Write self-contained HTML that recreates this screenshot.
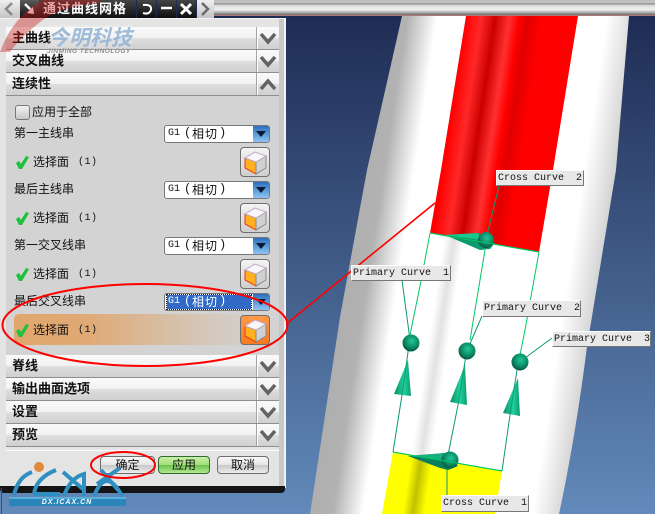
<!DOCTYPE html>
<html><head><meta charset="utf-8"><style>
html,body{margin:0;padding:0}
body{width:655px;height:514px;overflow:hidden;position:relative;background:#3a5580;font-family:"Liberation Sans","WenQuanYi Zen Hei","Noto Sans CJK SC",sans-serif;color:#111}
div,span{position:absolute;box-sizing:border-box;white-space:nowrap}
svg{position:absolute;left:0;top:0}
.sec{left:6px;width:273px;height:23px;background:linear-gradient(#fafafa 0,#f2f2f2 48%,#dedede 52%,#d0d0d0 100%);border-bottom:1px solid #8f8f8f;font-size:13px;font-weight:bold;line-height:22px;padding-left:6px;color:#111}
.sec:after{content:"";position:absolute;left:250px;top:0;width:1px;height:22px;background:#a4a4a4;box-shadow:1px 0 0 #fff}
.lab{left:14px;font-size:12px;line-height:16px;color:#111}
.dd{left:164px;width:106px;height:18px;background:#fff;border:1px solid #777;border-radius:3px;color:#111}
.dd i{position:absolute;right:0;top:0;width:16px;height:16px;background:linear-gradient(#2a6fc0,#8fc4f2);border-radius:0 2px 2px 0}
.dd i:after{content:"";position:absolute;left:3px;top:5px;border:5px solid transparent;border-top:6px solid #0b1a30;border-bottom:0}
.g{left:3px;top:0;font:10px/16px "Liberation Mono",monospace}
.p1{left:19px;top:0;font:12px/15px "Liberation Mono",monospace}
.p2{left:27px;top:0;font-size:12px;line-height:16px;letter-spacing:1px}
.p3{left:54px;top:0;font:12px/15px "Liberation Mono",monospace}
.cb{left:240px;width:30px;height:30px;background:linear-gradient(#f4f4f4,#cfcfcf);border:1px solid #6f6f6f;border-radius:4px}
.sel{left:33px;font-size:12px;line-height:16px}
.n{left:78px;font:10px/16px "Liberation Mono",monospace;letter-spacing:.5px}
.btn{top:456px;height:18px;text-align:center;font-size:12px;line-height:16px;border:1px solid #6d6d6d;border-radius:4px;background:linear-gradient(#f8f8f8,#e6e6e6 48%,#c8c8c8 52%,#ececec)}
.cl{background:#e8e8e8;border-right:1px solid #777;border-bottom:1px solid #777;border-left:1px solid #fff;border-top:1px solid #fff;font:10px/15px "Liberation Mono",monospace;padding-left:1px;color:#111;white-space:pre}
.tb{top:0;height:18px}
</style></head><body>
<svg width="655" height="514" viewBox="0 0 655 514">
<defs>
<linearGradient id="bg" x1="0" y1="16" x2="0" y2="514" gradientUnits="userSpaceOnUse"><stop offset="0" stop-color="#1e2c54"/><stop offset="1" stop-color="#628aba"/></linearGradient>
<linearGradient id="tube" gradientUnits="userSpaceOnUse" x1="380" y1="0" x2="644" y2="39.6">
<stop offset="0" stop-color="#aeaeae"/><stop offset=".11" stop-color="#b2b2b2"/><stop offset=".222" stop-color="#fff"/><stop offset=".37" stop-color="#fff"/><stop offset=".407" stop-color="#e2e2e2"/><stop offset=".444" stop-color="#fff"/><stop offset=".85" stop-color="#fff"/><stop offset=".944" stop-color="#dcdcdc"/><stop offset="1" stop-color="#c4c4c4"/></linearGradient>
<linearGradient id="red" gradientUnits="userSpaceOnUse" x1="380" y1="0" x2="644" y2="39.6">
<stop offset=".326" stop-color="#f00"/><stop offset=".385" stop-color="#ff2828"/><stop offset=".437" stop-color="#cc0000"/><stop offset=".489" stop-color="#ff3030"/><stop offset=".526" stop-color="#f00"/><stop offset=".556" stop-color="#e00000"/><stop offset=".611" stop-color="#f00"/></linearGradient>
<linearGradient id="yel" gradientUnits="userSpaceOnUse" x1="380" y1="0" x2="644" y2="39.6">
<stop offset=".37" stop-color="#ff0"/><stop offset=".407" stop-color="#c0c000"/><stop offset=".45" stop-color="#ff0"/></linearGradient>
<radialGradient id="sph" cx=".55" cy=".38" r=".65"><stop offset="0" stop-color="#1fc796"/><stop offset=".6" stop-color="#0c8a66"/><stop offset="1" stop-color="#04503a"/></radialGradient>
<linearGradient id="cone" x1="0" x2="1" y1="0" y2="0"><stop offset="0" stop-color="#0a8f6a"/><stop offset=".6" stop-color="#1fd29a"/><stop offset="1" stop-color="#0c9a72"/></linearGradient>
</defs>
<rect width="655" height="514" fill="url(#bg)"/>
<path d="M402 16 L367 170 L340 317 L310 514 L559 514 Q575 440 587 347 L616 170 L629 16Z" fill="url(#tube)"/>
<path d="M466 16 L578 16 L553 170 L539 252 L430 233 L441 170Z" fill="url(#red)"/>
<path d="M393 452 L502 471 L495 514 L382 514Z" fill="url(#yel)"/>
<path d="M285 325 L435 203" stroke="#f00" stroke-width="1.6" fill="none"/>
<g fill="none" stroke="#00c864" stroke-width="1">
<path d="M430 233 L539 252"/><path d="M393 452 L502 471"/>
<path d="M430 233 L421 281 L409 340"/><path d="M485 250 L470 340"/><path d="M539 252 L525 330 L518 365"/>
</g>
<polygon points="408,360 394,394 411,396" fill="url(#cone)"/>
<polygon points="465,365 450,402 467,405" fill="url(#cone)"/>
<polygon points="518,378 503,413 520,416" fill="url(#cone)"/>
<g fill="none" stroke="#0c9a78" stroke-width="1">
<path d="M409 345 L402 395 L393 452"/><path d="M466 355 L458 405 L447 460"/><path d="M517 370 L510 415 L502 471"/>
<path d="M402 280 L410 340"/><path d="M482 316 L469 346"/><path d="M552 338 L525 358"/><path d="M499 186 L487 235"/><path d="M447 462 L447 495"/>
</g>
<polygon points="445,235 478,233 495,243 490,249 480,250" fill="#0a9a6e"/>
<polygon points="445,235 478,233 482,240" fill="#18c88c"/>
<polygon points="408,456 445,453 458,466 448,470 440,468" fill="#0a7f5c"/>
<polygon points="408,456 445,453 445,460" fill="#16b080"/>
<circle cx="411" cy="343" r="8.500" fill="url(#sph)"/>
<circle cx="467" cy="351" r="8.500" fill="url(#sph)"/>
<circle cx="520" cy="362" r="8.500" fill="url(#sph)"/>
<circle cx="486" cy="240" r="8" fill="url(#sph)"/>
<circle cx="450" cy="460" r="8.500" fill="url(#sph)"/>
<path d="M430 233 L539 252M393 452 L502 471" stroke="#00c864" stroke-width="1" fill="none"/>
</svg>

<div class="cl" style="left:496px;top:170px;width:88px;height:16px">Cross Curve  2</div>
<div class="cl" style="left:351px;top:265px;width:100px;height:16px">Primary Curve  1</div>
<div class="cl" style="left:482px;top:300px;width:99px;height:17px">Primary Curve  2</div>
<div class="cl" style="left:552px;top:331px;width:99px;height:16px">Primary Curve  3</div>
<div class="cl" style="left:441px;top:495px;width:88px;height:17px">Cross Curve  1</div>

<!-- top strip -->
<div style="left:214px;top:0;width:441px;height:16px;background:linear-gradient(#bdbdbd 0,#c4c4c4 18%,#8a8a8a 22%,#dcdcdc 35%,#f0f0f0 60%,#b0b0b0 78%,#6f6f6f 90%,#a0a0a0 96%,#d22 100%)"></div>

<!-- panel -->
<div style="left:0;top:18px;width:286px;height:470px;background:#e4e4e4;border-right:2px solid #f2f2f2;border-top:1px solid #f2f2f2"></div>
<div style="left:279px;top:19px;width:5px;height:467px;background:#c8c8c8"></div>
<div style="left:0;top:486px;width:285px;height:7px;background:#141414;border-radius:0 0 4px 4px"></div>

<div class="sec" style="top:27px">主曲线</div>
<div class="sec" style="top:50px">交叉曲线</div>
<div class="sec" style="top:73px">连续性</div>
<div style="left:6px;top:96px;width:273px;height:259px;background:#d3d3d3"></div>
<div class="sec" style="top:355px">脊线</div>
<div class="sec" style="top:378px">输出曲面选项</div>
<div class="sec" style="top:401px">设置</div>
<div class="sec" style="top:424px">预览</div>
<div style="left:6px;top:450px;width:273px;height:1px;background:#fff"></div>

<div style="left:15px;top:105px;width:15px;height:15px;border:1px solid #777;border-radius:3px;background:linear-gradient(#f2f2f2,#c8c8c8)"></div>
<div class="lab" style="left:32px;top:104px">应用于全部</div>

<div class="lab" style="top:125px">第一主线串</div>
<div class="lab" style="top:181px">最后主线串</div>
<div class="lab" style="top:237px">第一交叉线串</div>
<div class="lab" style="top:293px">最后交叉线串</div>

<div class="dd" style="top:125px"><span class="g">G1</span><span class="p1">(</span><span class="p2">相切</span><span class="p3">)</span><i></i></div>
<div class="dd" style="top:181px"><span class="g">G1</span><span class="p1">(</span><span class="p2">相切</span><span class="p3">)</span><i></i></div>
<div class="dd" style="top:237px"><span class="g">G1</span><span class="p1">(</span><span class="p2">相切</span><span class="p3">)</span><i></i></div>
<div class="dd" style="top:293px"><span style="left:2px;top:1px;width:84px;height:14px;background:#3169c6;outline:1px dotted #222"></span><span class="g" style="color:#fff">G1</span><span class="p1" style="color:#fff">(</span><span class="p2" style="color:#fff">相切</span><span class="p3" style="color:#fff">)</span><i></i></div>

<div style="left:14px;top:314px;width:232px;height:31px;border-radius:5px;background:linear-gradient(90deg,#e0a76c 0,#e0a974 30%,#d6c0aa 70%,#d3d0cc 100%)"></div>

<div class="cb" style="top:147px"></div>
<div class="cb" style="top:203px"></div>
<div class="cb" style="top:259px"></div>
<div class="cb" style="top:315px;background:linear-gradient(#ff9a4a,#f57a20)"></div>

<div class="sel" style="top:154px">选择面</div><div class="n" style="top:155px">(1)</div>
<div class="sel" style="top:210px">选择面</div><div class="n" style="top:211px">(1)</div>
<div class="sel" style="top:266px">选择面</div><div class="n" style="top:267px">(1)</div>
<div class="sel" style="top:322px">选择面</div><div class="n" style="top:323px">(1)</div>

<div class="btn" style="left:100px;width:55px">确定</div>
<div class="btn" style="left:158px;width:52px;border-color:#2f6a2f;background:linear-gradient(#c9f0a8,#a4e07a 48%,#6cc04c 52%,#b4ea90)">应用</div>
<div class="btn" style="left:217px;width:52px">取消</div>

<svg width="655" height="514" viewBox="0 0 655 514">
<defs>
<g id="ck"><polygon points="0,7 3,5 5,8 10,0 13,1 6,13 3,13" fill="#1cc23a"/></g>
<g id="cube"><polygon points="5,11 16,15 16,27 5,21" fill="#ffb020" stroke="#f03010"/><polygon points="16,15 26,9 26,21 16,27" fill="#d0d0d0" stroke="#888"/><polygon points="5,11 15,5 26,9 16,15" fill="#f8f8f8" stroke="#c0a8c8"/></g>
<g id="chd"><path d="M0 0 L7 8 L14 0" fill="none" stroke="#636363" stroke-width="3.500"/></g>
</defs>
<use href="#ck" x="16" y="156"/><use href="#ck" x="16" y="212"/><use href="#ck" x="16" y="268"/><use href="#ck" x="16" y="324"/>
<use href="#cube" x="240" y="147"/><use href="#cube" x="240" y="203"/><use href="#cube" x="240" y="259"/><use href="#cube" x="240" y="315"/>
<use href="#chd" x="261" y="34"/><use href="#chd" x="261" y="57"/><path d="M261 89 L268 81 L275 89" fill="none" stroke="#636363" stroke-width="3.500"/>
<use href="#chd" x="261" y="362"/><use href="#chd" x="261" y="385"/><use href="#chd" x="261" y="408"/><use href="#chd" x="261" y="431"/>
</svg>

<!-- title bar -->
<div class="tb" style="left:0;width:20px;background:linear-gradient(#efefef,#c4c4c4)"></div>
<div class="tb" style="left:20px;width:19px;background:linear-gradient(#5a5a5a,#111)"></div>
<div class="tb" style="left:39px;width:97px;background:linear-gradient(#444,#111);color:#fff;font-size:13px;font-weight:bold;line-height:18px;padding-left:4px;letter-spacing:1px">通过曲线网格</div>
<div class="tb" style="left:137px;width:19px;background:linear-gradient(#444,#0d0d0d)"></div>
<div class="tb" style="left:157px;width:19px;background:linear-gradient(#444,#0d0d0d)"></div>
<div class="tb" style="left:177px;width:19px;background:linear-gradient(#444,#0d0d0d)"></div>
<div class="tb" style="left:197px;width:17px;background:linear-gradient(#efefef,#c4c4c4)"></div>
<svg width="655" height="514" viewBox="0 0 655 514">
<path d="M12 3 L6 9 L12 15" fill="none" stroke="#8a8a8a" stroke-width="2.500"/>
<path d="M202 3 L208 9 L202 15" fill="none" stroke="#6a6a6a" stroke-width="2.500"/>
<path d="M25 4 L33 12" stroke="#fff" stroke-width="2.500"/><path d="M34 14 L27 13 L33 7Z" fill="#fff"/>
<path d="M143 5 Q152 4 151 10 Q149 15 143 13" fill="none" stroke="#fff" stroke-width="2"/>
<path d="M161 8 H172" stroke="#fff" stroke-width="2.500"/>
<path d="M181 4 L191 14 M191 4 L181 14" stroke="#fff" stroke-width="3"/>

<!-- watermark -->
<path d="M0 52 Q12 18 42 0 L100 0 L100 3 Q60 6 40 22 Q20 38 10 52Z" fill="#c81818" fill-opacity=".4"/>
<rect x="48" y="25" width="84" height="27" fill="#fff" fill-opacity=".18"/>
<text x="48" y="45" font-family="Liberation Sans,WenQuanYi Zen Hei,Noto Sans CJK SC,sans-serif" font-size="21" font-weight="bold" font-style="italic" fill="#8fb2d4" fill-opacity=".85">今明科技</text>
<text x="47" y="53" font-family="Liberation Sans,sans-serif" font-size="6.500" font-weight="bold" font-style="italic" fill="#8a8a8a" letter-spacing=".5">JINMING TECHNOLOGY</text>

<!-- icax logo -->
<g fill="none" stroke="#2f8fc0" stroke-width="4">
<path d="M14 495 Q18 477 32 472"/>
<path d="M34 494 Q36 478 56 470"/><path d="M34 494 L60 494"/>
<path d="M64 496 Q70 478 84 474 L84 496"/><path d="M63 472 L84 490"/>
<path d="M94 496 Q106 466 122 496"/><path d="M97 484 L120 468"/><path d="M101 470 L118 490"/>
</g>
<circle cx="39" cy="467" r="5" fill="#e08a3a"/>
<rect x="9" y="497" width="117" height="9" fill="#2a86b8"/>
<rect x="9" y="497" width="117" height="2" fill="#5ab0dc"/>
<text x="67" y="504" text-anchor="middle" font-family="Liberation Sans,sans-serif" font-size="7" font-weight="bold" font-style="italic" fill="#fff" letter-spacing="1">DX.ICAX.CN</text>
<rect x="1" y="488" width="1" height="26" fill="#c81818"/>

<!-- red ellipses -->
<ellipse cx="145" cy="325" rx="142.500" ry="41" fill="none" stroke="#f00" stroke-width="2"/>
<ellipse cx="123" cy="465" rx="32" ry="13" fill="none" stroke="#f00" stroke-width="2"/>
</svg>
</body></html>
